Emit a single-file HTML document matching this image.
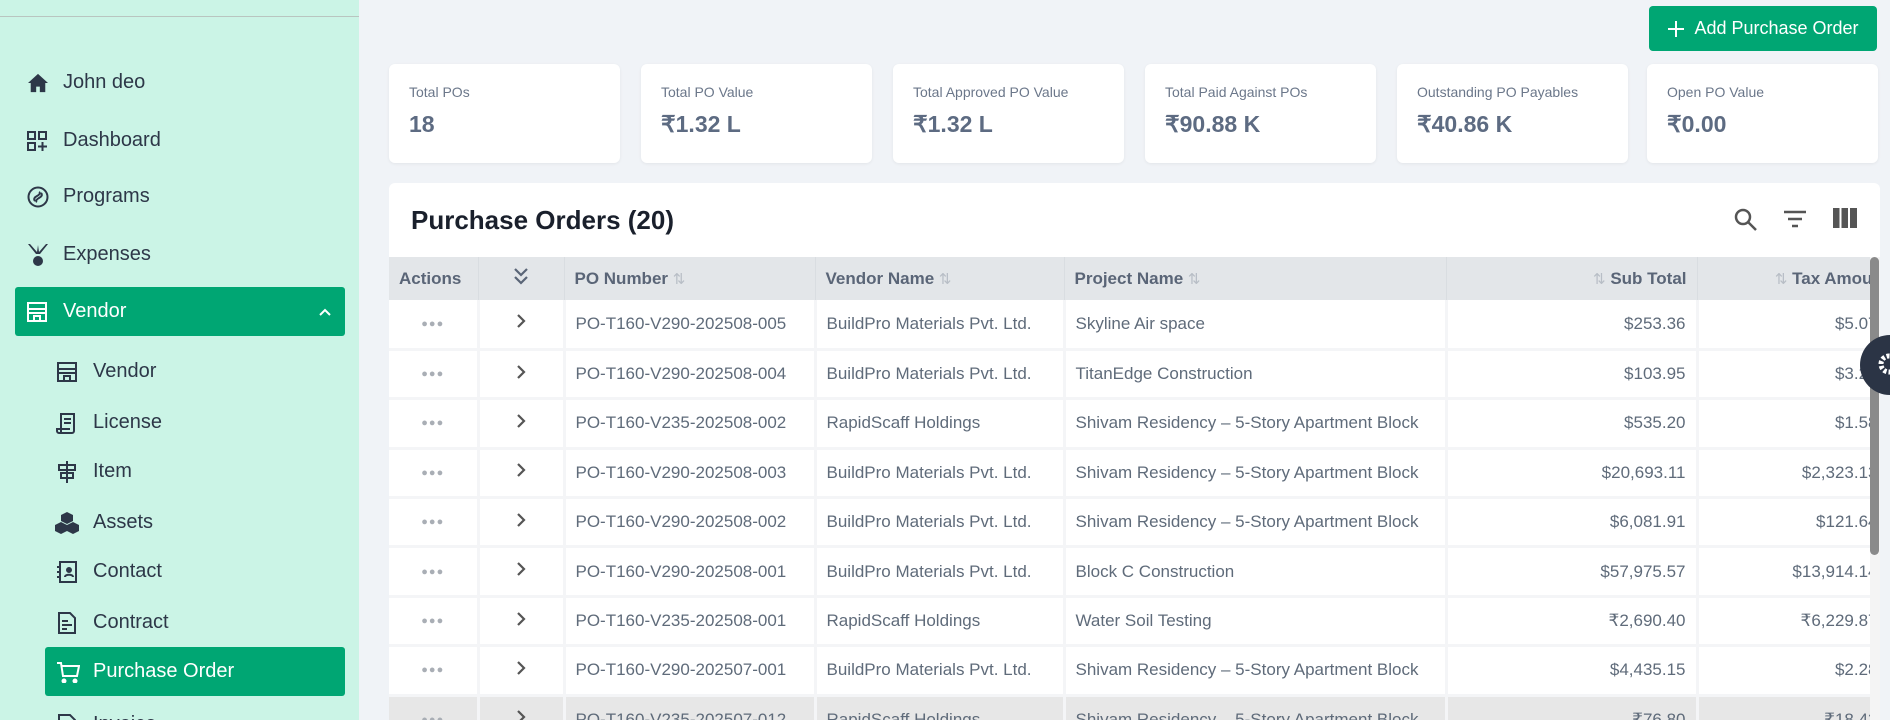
<!DOCTYPE html>
<html style="width:1890px;height:720px;overflow:hidden"><head><meta charset="utf-8"><style>
*{box-sizing:border-box;margin:0;padding:0}
body{width:1890px;height:720px;overflow:hidden;background:#f0f3f7;font-family:"Liberation Sans",Arial,sans-serif;position:relative}
.sb{position:absolute;left:0;top:0;width:359px;height:720px;background:#cbf4e6;overflow:hidden}
.sb .line{position:absolute;left:0;top:16px;width:359px;height:1px;background:#b9c5c0}
.ni{position:absolute;left:0;height:49px;display:flex;align-items:center;font-size:20px;color:#2d3748}
.ni svg{position:absolute}
.act{background:#00a673;color:#fff;border-radius:3px}
.card{position:absolute;top:64px;width:231px;height:99px;background:#fff;border-radius:6px;box-shadow:0 1px 3px rgba(0,0,0,.06)}
.card .l{position:absolute;left:20px;top:20px;font-size:14px;color:#6b778a}
.card .v{position:absolute;left:20px;top:47px;font-size:23px;font-weight:bold;color:#5d6b82}
.btn{position:absolute;left:1649px;top:6px;width:228px;height:45px;background:#00a673;border-radius:4px;color:#fff;font-size:18px;display:flex;align-items:center;justify-content:center;gap:9px}
.tc{position:absolute;left:389px;top:183px;width:1491px;height:537px;background:#fff;border-radius:6px 6px 0 0;overflow:hidden}
.tt{position:absolute;left:22px;top:22px;font-size:26px;font-weight:bold;color:#1a202c}
table{position:absolute;left:0;top:74px;border-collapse:collapse;table-layout:fixed;width:1500px}
td,th{height:49.4px;font-size:17px;color:#5f6b7a;white-space:nowrap;overflow:hidden;border:3px solid #f4f5f7;border-top:0;border-left:0;padding:0 10px;text-align:left}
th{height:43px;background:#e3e6e9;font-weight:bold;color:#5a6577;border-color:#d9dde1;border-width:0 1px 0 0;box-shadow:0 2px 3px rgba(0,0,0,.05)}
td.r,th.r{text-align:right}
.s{color:#b8bec6;font-weight:normal;font-size:15px}
.dots{color:#a9aeb5;text-align:center;letter-spacing:1px;font-size:11px}
.chev{text-align:center}
tr.g td{background:#e7e7e7}
</style></head><body>
<div class="sb"><div class="line"></div>
<div class="ni" style="top:58px;left:63px">
<svg style="left:-36px" width="22" height="20" viewBox="0 0 24 22"><path d="M12 1L1 11h3v10h6v-6h4v6h6V11h3z" fill="#2d3748"/></svg>John deo</div>
<div class="ni" style="top:116px;left:63px"><svg style="left:-36px" width="20" height="20" viewBox="0 0 20 20" fill="none" stroke="#2d3748" stroke-width="2"><rect x="1" y="1" width="7" height="7"/><rect x="12" y="1" width="7" height="7"/><rect x="1" y="12" width="7" height="7"/><path d="M15.5 11v9M11 15.5h9"/></svg>Dashboard</div>
<div class="ni" style="top:172px;left:63px"><svg style="left:-36px" width="22" height="22" viewBox="0 0 22 22" fill="none" stroke="#2d3748" stroke-width="2"><circle cx="11" cy="11" r="9.5"/><path d="M8 15c-2-2 0-4 2-5s4-3 2-4M14 7c2 2 0 4-2 5s-4 3-2 4"/></svg>Programs</div>
<div class="ni" style="top:230px;left:63px"><svg style="left:-36px" width="22" height="26" viewBox="0 0 22 26" fill="#2d3748"><path d="M1 2l8 10h4l8-10-2 0-7 8-1-7-1 7-7-8z"/><circle cx="11" cy="19" r="5"/></svg>Expenses</div>
<div class="ni act" style="top:287px;left:15px;width:330px"><svg style="left:11px" width="22" height="22" viewBox="0 0 22 22" fill="none" stroke="#fff" stroke-width="2"><rect x="2" y="2" width="18" height="18"/><path d="M2 8h18M2 12h18M8 20v-5h6v5"/></svg><span style="margin-left:48px">Vendor</span><svg style="right:14px" width="12" height="8" viewBox="0 0 12 8"><path d="M1 7l5-5 5 5" stroke="#fff" stroke-width="2" fill="none"/></svg></div>
<div class="ni" style="top:347px;left:93px">
<svg style="left:-36px" width="20" height="20" viewBox="0 0 20 20" fill="none" stroke="#2d3748" stroke-width="2"><rect x="1" y="1" width="18" height="18"/><path d="M1 7h18M1 11h18M7 19v-5h6v5"/></svg>Vendor</div>
<div class="ni" style="top:398px;left:93px"><svg style="left:-37px" width="22" height="24" viewBox="0 0 22 24" fill="none" stroke="#2d3748" stroke-width="2"><path d="M5 22V3h13v17a2 2 0 0 1-2 2H3a2 2 0 0 1-2-2v-2h13M8 8h7M8 12h7"/></svg>License</div>
<div class="ni" style="top:447px;left:93px"><svg style="left:-36px" width="20" height="22" viewBox="0 0 20 22" fill="none" stroke="#2d3748" stroke-width="2"><path d="M10 0v22M2 4h16v5H2zM4 12h12v5H4z"/></svg>Item</div>
<div class="ni" style="top:498px;left:93px"><svg style="left:-38px" width="24" height="22" viewBox="0 0 24 22" fill="#2d3748"><path d="M12 0l6 3v6l-6 3-6-3V3zM6 10l6 3v6l-6 3-6-3v-6zM18 10l6 3v6l-6 3-6-3v-6z"/></svg>Assets</div>
<div class="ni" style="top:547px;left:93px"><svg style="left:-36px" width="20" height="22" viewBox="0 0 20 22" fill="none" stroke="#2d3748" stroke-width="2"><rect x="3" y="1" width="16" height="20"/><path d="M0 6h4M0 11h4M0 16h4"/><circle cx="12" cy="9" r="2" fill="#2d3748"/><path d="M8 16c0-3 8-3 8 0"/></svg>Contact</div>
<div class="ni" style="top:598px;left:93px"><svg style="left:-35px" width="18" height="22" viewBox="0 0 18 22" fill="none" stroke="#2d3748" stroke-width="2"><path d="M1 1h11l5 5v15H1zM4 9h6M4 13h10M4 17h5"/></svg>Contract</div>
<div class="ni act" style="top:647px;left:45px;width:300px"><svg style="left:11px" width="24" height="22" viewBox="0 0 24 22" fill="none" stroke="#fff" stroke-width="2"><path d="M1 2h4l2 13h14l2-10H6"/><circle cx="8" cy="20" r="1.5" fill="#fff"/><circle cx="19" cy="20" r="1.5" fill="#fff"/></svg><span style="margin-left:48px">Purchase Order</span></div>
<div class="ni" style="top:700px;left:93px"><svg style="left:-35px" width="18" height="22" viewBox="0 0 18 22" fill="none" stroke="#2d3748" stroke-width="2"><path d="M1 1h11l5 5v15H1z"/></svg>Invoice</div>
</div>
<div class="btn"><svg width="18" height="18" viewBox="0 0 18 18"><path d="M9 1v16M1 9h16" stroke="#fff" stroke-width="2"/></svg>Add Purchase Order</div>
<div class="card" style="left:389px"><div class="l">Total POs</div><div class="v">18</div></div>
<div class="card" style="left:641px"><div class="l">Total PO Value</div><div class="v">₹1.32 L</div></div>
<div class="card" style="left:893px"><div class="l">Total Approved PO Value</div><div class="v">₹1.32 L</div></div>
<div class="card" style="left:1145px"><div class="l">Total Paid Against POs</div><div class="v">₹90.88 K</div></div>
<div class="card" style="left:1397px"><div class="l">Outstanding PO Payables</div><div class="v">₹40.86 K</div></div>
<div class="card" style="left:1647px"><div class="l">Open PO Value</div><div class="v">₹0.00</div></div>
<div class="tc">
<div class="tt">Purchase Orders (20)</div>
<svg style="position:absolute;left:1344px;top:24px" width="26" height="26" viewBox="0 0 26 26" fill="none" stroke="#555" stroke-width="2.5"><circle cx="10" cy="10" r="7"/><path d="M15 15l8 8"/></svg>
<svg style="position:absolute;left:1394px;top:27px" width="24" height="18" viewBox="0 0 24 18" stroke="#555" stroke-width="2.5"><path d="M1 2h22M5 9h14M9 16h6"/></svg>
<svg style="position:absolute;left:1444px;top:25px" width="24" height="20" viewBox="0 0 24 20" fill="#555"><rect x="0" y="0" width="6.5" height="20"/><rect x="8.5" y="0" width="6.5" height="20"/><rect x="17" y="0" width="7" height="20"/></svg>
<table>
<colgroup><col style="width:89px"><col style="width:86px"><col style="width:251px"><col style="width:249px"><col style="width:382px"><col style="width:251px"><col style="width:192px"></colgroup>
<tr><th>Actions</th><th style="text-align:center"><svg width="16" height="18" viewBox="0 0 16 18" fill="none" stroke="#5a6577" stroke-width="2.2"><path d="M2 2l6 6 6-6M2 10l6 6 6-6"/></svg></th><th>PO Number <span class="s">⇅</span></th><th>Vendor Name <span class="s">⇅</span></th><th>Project Name <span class="s">⇅</span></th><th class="r"><span class="s">⇅</span> Sub Total</th><th class="r" style="padding-right:0"><span class="s">⇅</span> Tax Amount</th></tr>
<tr><td class="dots">●●●</td><td class="chev"><svg width="10" height="16" viewBox="0 0 10 16"><path d="M2 2l6 6-6 6" stroke="#555" stroke-width="2.2" fill="none"/></svg></td><td>PO-T160-V290-202508-005</td><td>BuildPro Materials Pvt. Ltd.</td><td>Skyline Air space</td><td class="r">$253.36</td><td class="r">$5.07</td></tr>
<tr><td class="dots">●●●</td><td class="chev"><svg width="10" height="16" viewBox="0 0 10 16"><path d="M2 2l6 6-6 6" stroke="#555" stroke-width="2.2" fill="none"/></svg></td><td>PO-T160-V290-202508-004</td><td>BuildPro Materials Pvt. Ltd.</td><td>TitanEdge Construction</td><td class="r">$103.95</td><td class="r">$3.20</td></tr>
<tr><td class="dots">●●●</td><td class="chev"><svg width="10" height="16" viewBox="0 0 10 16"><path d="M2 2l6 6-6 6" stroke="#555" stroke-width="2.2" fill="none"/></svg></td><td>PO-T160-V235-202508-002</td><td>RapidScaff Holdings</td><td>Shivam Residency – 5-Story Apartment Block</td><td class="r">$535.20</td><td class="r">$1.58</td></tr>
<tr><td class="dots">●●●</td><td class="chev"><svg width="10" height="16" viewBox="0 0 10 16"><path d="M2 2l6 6-6 6" stroke="#555" stroke-width="2.2" fill="none"/></svg></td><td>PO-T160-V290-202508-003</td><td>BuildPro Materials Pvt. Ltd.</td><td>Shivam Residency – 5-Story Apartment Block</td><td class="r">$20,693.11</td><td class="r">$2,323.13</td></tr>
<tr><td class="dots">●●●</td><td class="chev"><svg width="10" height="16" viewBox="0 0 10 16"><path d="M2 2l6 6-6 6" stroke="#555" stroke-width="2.2" fill="none"/></svg></td><td>PO-T160-V290-202508-002</td><td>BuildPro Materials Pvt. Ltd.</td><td>Shivam Residency – 5-Story Apartment Block</td><td class="r">$6,081.91</td><td class="r">$121.64</td></tr>
<tr><td class="dots">●●●</td><td class="chev"><svg width="10" height="16" viewBox="0 0 10 16"><path d="M2 2l6 6-6 6" stroke="#555" stroke-width="2.2" fill="none"/></svg></td><td>PO-T160-V290-202508-001</td><td>BuildPro Materials Pvt. Ltd.</td><td>Block C Construction</td><td class="r">$57,975.57</td><td class="r">$13,914.14</td></tr>
<tr><td class="dots">●●●</td><td class="chev"><svg width="10" height="16" viewBox="0 0 10 16"><path d="M2 2l6 6-6 6" stroke="#555" stroke-width="2.2" fill="none"/></svg></td><td>PO-T160-V235-202508-001</td><td>RapidScaff Holdings</td><td>Water Soil Testing</td><td class="r">₹2,690.40</td><td class="r">₹6,229.87</td></tr>
<tr><td class="dots">●●●</td><td class="chev"><svg width="10" height="16" viewBox="0 0 10 16"><path d="M2 2l6 6-6 6" stroke="#555" stroke-width="2.2" fill="none"/></svg></td><td>PO-T160-V290-202507-001</td><td>BuildPro Materials Pvt. Ltd.</td><td>Shivam Residency – 5-Story Apartment Block</td><td class="r">$4,435.15</td><td class="r">$2.28</td></tr>
<tr class="g"><td class="dots">●●●</td><td class="chev"><svg width="10" height="16" viewBox="0 0 10 16"><path d="M2 2l6 6-6 6" stroke="#555" stroke-width="2.2" fill="none"/></svg></td><td>PO-T160-V235-202507-012</td><td>RapidScaff Holdings</td><td>Shivam Residency – 5-Story Apartment Block</td><td class="r">₹76.80</td><td class="r">₹18.43</td></tr>
</table>
<div style="position:absolute;left:1481px;top:74px;width:10px;height:500px;background:#f4f4f4"></div>
<div style="position:absolute;left:1481px;top:74px;width:9px;height:298px;background:#8a8a8a;border-radius:5px"></div>
</div>
<div style="position:absolute;left:1860px;top:335px;width:60px;height:60px;border-radius:30px;background:#2b3445"></div>
<svg style="position:absolute;left:1877px;top:352px" width="13" height="24" viewBox="0 0 13 24"><circle cx="12" cy="12" r="8" fill="none" stroke="#fff" stroke-width="5" stroke-dasharray="3 2"/></svg>
</body></html>
